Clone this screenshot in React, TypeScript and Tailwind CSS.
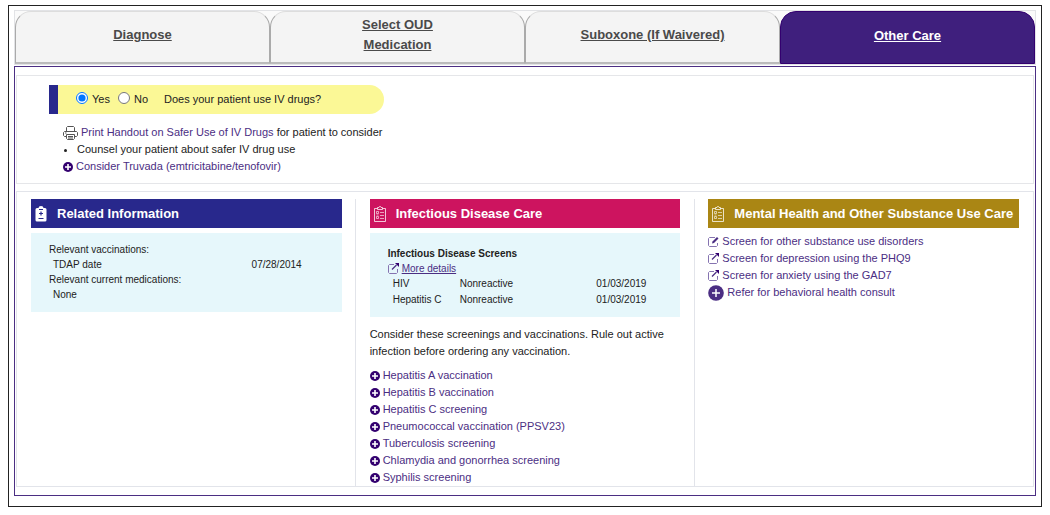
import React, { useState } from "react";

const tabs = ["Diagnose", "Select OUD Medication", "Suboxone (If Waivered)", "Other Care"];

const orders = [
  "Hepatitis A vaccination",
  "Hepatitis B vaccination",
  "Hepatitis C screening",
  "Pneumococcal vaccination (PPSV23)",
  "Tuberculosis screening",
  "Chlamydia and gonorrhea screening",
  "Syphilis screening",
];

const screens = [
  { name: "HIV", result: "Nonreactive", date: "01/03/2019" },
  { name: "Hepatitis C", result: "Nonreactive", date: "01/03/2019" },
];

const PrinterIcon = () => (
  <svg className="w-[15px] h-[14px] shrink-0" viewBox="0 0 15 14" fill="none" stroke="#555" strokeWidth="1">
    <path d="M3.5 5.5v-4l1-1h6l1 1v4" />
    <path d="M3 10.5H1.5l-1-1v-3l1-1h12l1 1v3l-1 1H12" />
    <path d="M3.5 8.5h8v4l-1 1h-6l-1-1z" fill="#fff" />
    <path d="M5 10.5h5M5 12h5" />
    <path d="M2 7h1.5" />
  </svg>
);

const ExternalIcon = () => (
  <svg className="w-[11px] h-[11px] shrink-0" viewBox="0 0 11 11" fill="none">
    <path d="M6 1.5H1.5l-1 1v7l1 1h7l1-1V6" stroke="#8573b0" />
    <path d="M4 6.5L8.500 2" stroke="#4b2e83" strokeWidth="1.300" />
    <path d="M7 0h4v4z" fill="#33006f" />
  </svg>
);

const EditIcon = () => (
  <svg className="w-[11px] h-[11px] shrink-0" viewBox="0 0 11 11" fill="none">
    <path d="M7 1.500H1.500l-1 1v7l1 1h7l1-1V7" stroke="#8573b0" />
    <path d="M4 7.500l.5-2L9 1l1.500 1.500L6 7z" fill="#4b2e83" />
  </svg>
);

const PlusIcon = () => (
  <svg className="w-[10px] h-[10px] shrink-0" viewBox="0 0 10 10">
    <circle cx="5" cy="5" r="5" fill="#33006f" />
    <path d="M5 2v6M2 5h6" stroke="#fff" strokeWidth="1.600" />
  </svg>
);

const BigPlusIcon = () => (
  <svg className="w-4 h-4 shrink-0" viewBox="0 0 16 16">
    <circle cx="8" cy="8" r="7.800" fill="#4b2e83" />
    <path d="M8 4v8M4 8h8" stroke="#fff" strokeWidth="1.500" />
  </svg>
);

const ClipboardSolid = () => (
  <svg className="w-3 h-4 shrink-0" viewBox="0 0 12 16">
    <path d="M2 2h1.500a2.500 2 0 0 1 5 0H10a1.500 1.500 0 0 1 1.500 1.500v10.500A1.500 1.500 0 0 1 10 15.500H2A1.500 1.500 0 0 1 .5 14V3.500A1.500 1.500 0 0 1 2 2z" fill="#fff" />
    <path d="M4 3.500h4M6 5.500v4M4 7.500h4M3.500 12.500h5" stroke="#28288c" strokeWidth="1.200" />
  </svg>
);

const ClipboardList = () => (
  <svg className="w-3 h-4 shrink-0" viewBox="0 0 12 16" fill="none" stroke="#fff" strokeOpacity=".75">
    <path d="M3.500 2.500h-3v13h11v-13h-3" />
    <path d="M3.500 3.500v-2h1.500l.5-1h1l.5 1h1.500v2z" />
    <path d="M2.500 5.500h2v2h-2zM2.500 10.500h2v2h-2zM6 6.500h4M6 9.500h4M2.500 9h2M6 12.500h4" strokeWidth=".8" />
  </svg>
);

interface HeadingProps {
  icon: React.ReactNode;
  className: string;
  children: React.ReactNode;
}

const Heading: React.FC<HeadingProps> = ({ icon, className, children }) => (
  <h2 className={`flex items-center gap-[10px] h-[29px] pl-1 text-[13px] font-bold text-white whitespace-nowrap ${className}`}>
    {icon}
    {children}
  </h2>
);

interface ActionProps {
  icon: React.ReactNode;
  children: React.ReactNode;
}

const Action: React.FC<ActionProps> = ({ icon, children }) => (
  <a href="#" className="flex items-center gap-[3px] text-[#4b2e83]">
    {icon}
    {children}
  </a>
);

export default function App() {
  const [usesIv, setUsesIv] = useState(true);

  return (
    <div className="px-2 pt-[5px] pb-2 bg-white text-[#222] font-['Liberation_Sans',Arial,sans-serif] text-[11px] leading-[17px]">
      <div className="border border-[#222] px-[5px] pt-1 pb-[10px]">
        <nav className="grid grid-cols-4 border border-[#e2e3e6] bg-[#fafafa]">
          {tabs.map((tab, i) => (
            <a
              key={tab}
              href="#"
              className={`flex items-center justify-center h-[53px] px-16 pb-1 text-center text-[13px] leading-[20px] font-bold underline whitespace-nowrap rounded-t-2xl ${
                i === 3
                  ? "bg-[#3f1f7d] text-white border border-[#33006f]"
                  : "bg-[#f4f4f4] text-[#4a4a4a] border-t border-x border-b-2 border-t-[#ddd] border-x-[#aaa] border-b-[#bbb]"
              }`}
            >
              {i === 1 ? <span className="whitespace-normal">{tab}</span> : tab}
            </a>
          ))}
        </nav>

        <main className="mt-px border border-[#4b2e83] pt-2 pb-2 px-px">
          <section className="border border-[#e5e6e9] pl-8 pt-[9px] pb-2">
            <fieldset className="flex items-center w-[335px] h-[29px] border-l-[9px] border-[#28288c] bg-[#fbf896] rounded-r-full pl-[18px]">
              <label className="flex items-center gap-1">
                <input type="radio" name="iv" className="w-3 h-3 mb-1 accent-[#0075ff]" checked={usesIv} onChange={() => setUsesIv(true)} />
                Yes
              </label>
              <label className="flex items-center gap-1 ml-2">
                <input type="radio" name="iv" className="w-3 h-3 mb-1 accent-[#0075ff]" checked={!usesIv} onChange={() => setUsesIv(false)} />
                No
              </label>
              <span className="ml-4">Does your patient use IV drugs?</span>
            </fieldset>
            <div className="mt-[10px] pl-[14px]">
              <div className="flex items-center gap-[3px]">
                <PrinterIcon />
                <span>
                  <a href="#" className="text-[#4b2e83]">Print Handout on Safer Use of IV Drugs</a> for patient to consider
                </span>
              </div>
              <ul className="list-disc pl-[14px]">
                <li>Counsel your patient about safer IV drug use</li>
              </ul>
              <Action icon={<PlusIcon />}>Consider Truvada (emtricitabine/tenofovir)</Action>
            </div>
          </section>

          <div className="grid grid-cols-3 mt-[7px] pt-[7px] border border-[#e2e4ea]">
            <section className="px-[14px]">
              <Heading icon={<ClipboardSolid />} className="bg-[#28288c]">Related Information</Heading>
              <div className="mt-[5px] bg-[#e6f7fb] pl-[18px] pr-10 pt-[9px] pb-[10px] text-[10px] leading-[15px]">
                <p>Relevant vaccinations:</p>
                <p className="flex justify-between pl-1"><span>TDAP date</span><span>07/28/2014</span></p>
                <p>Relevant current medications:</p>
                <p className="pl-1">None</p>
              </div>
            </section>

            <section className="-mx-px px-[14px] border-x border-[#e2e4ea]">
              <Heading icon={<ClipboardList />} className="bg-[#cd145f]">Infectious Disease Care</Heading>
              <div className="mt-[5px] bg-[#e6f7fb] pl-[18px] pr-[34px] pt-[13px] pb-[9px] text-[10px] leading-[15px]">
                <h3 className="font-bold">Infectious Disease Screens</h3>
                <a href="#" className="flex items-center gap-[3px] text-[#4b2e83] underline"><ExternalIcon />More details</a>
                <table className="w-full leading-[16px]">
                  <tbody>
                    {screens.map((s) => (
                      <tr key={s.name}>
                        <td className="w-[72px] pl-[5px]">{s.name}</td>
                        <td>{s.result}</td>
                        <td className="text-right">{s.date}</td>
                      </tr>
                    ))}
                  </tbody>
                </table>
              </div>
              <p className="mt-[9px] mb-[7px]">
                Consider these screenings and vaccinations. Rule out active infection before ordering any vaccination.
              </p>
              <ul>
                {orders.map((order) => (
                  <li key={order}><Action icon={<PlusIcon />}>{order}</Action></li>
                ))}
              </ul>
            </section>

            <section className="px-[14px]">
              <Heading icon={<ClipboardList />} className="bg-[#aa8614]">Mental Health and Other Substance Use Care</Heading>
              <div className="mt-[5px]">
                <Action icon={<EditIcon />}>Screen for other substance use disorders</Action>
                <Action icon={<ExternalIcon />}>Screen for depression using the PHQ9</Action>
                <Action icon={<ExternalIcon />}>Screen for anxiety using the GAD7</Action>
                <Action icon={<BigPlusIcon />}>Refer for behavioral health consult</Action>
              </div>
            </section>
          </div>
        </main>
      </div>
    </div>
  );
}
